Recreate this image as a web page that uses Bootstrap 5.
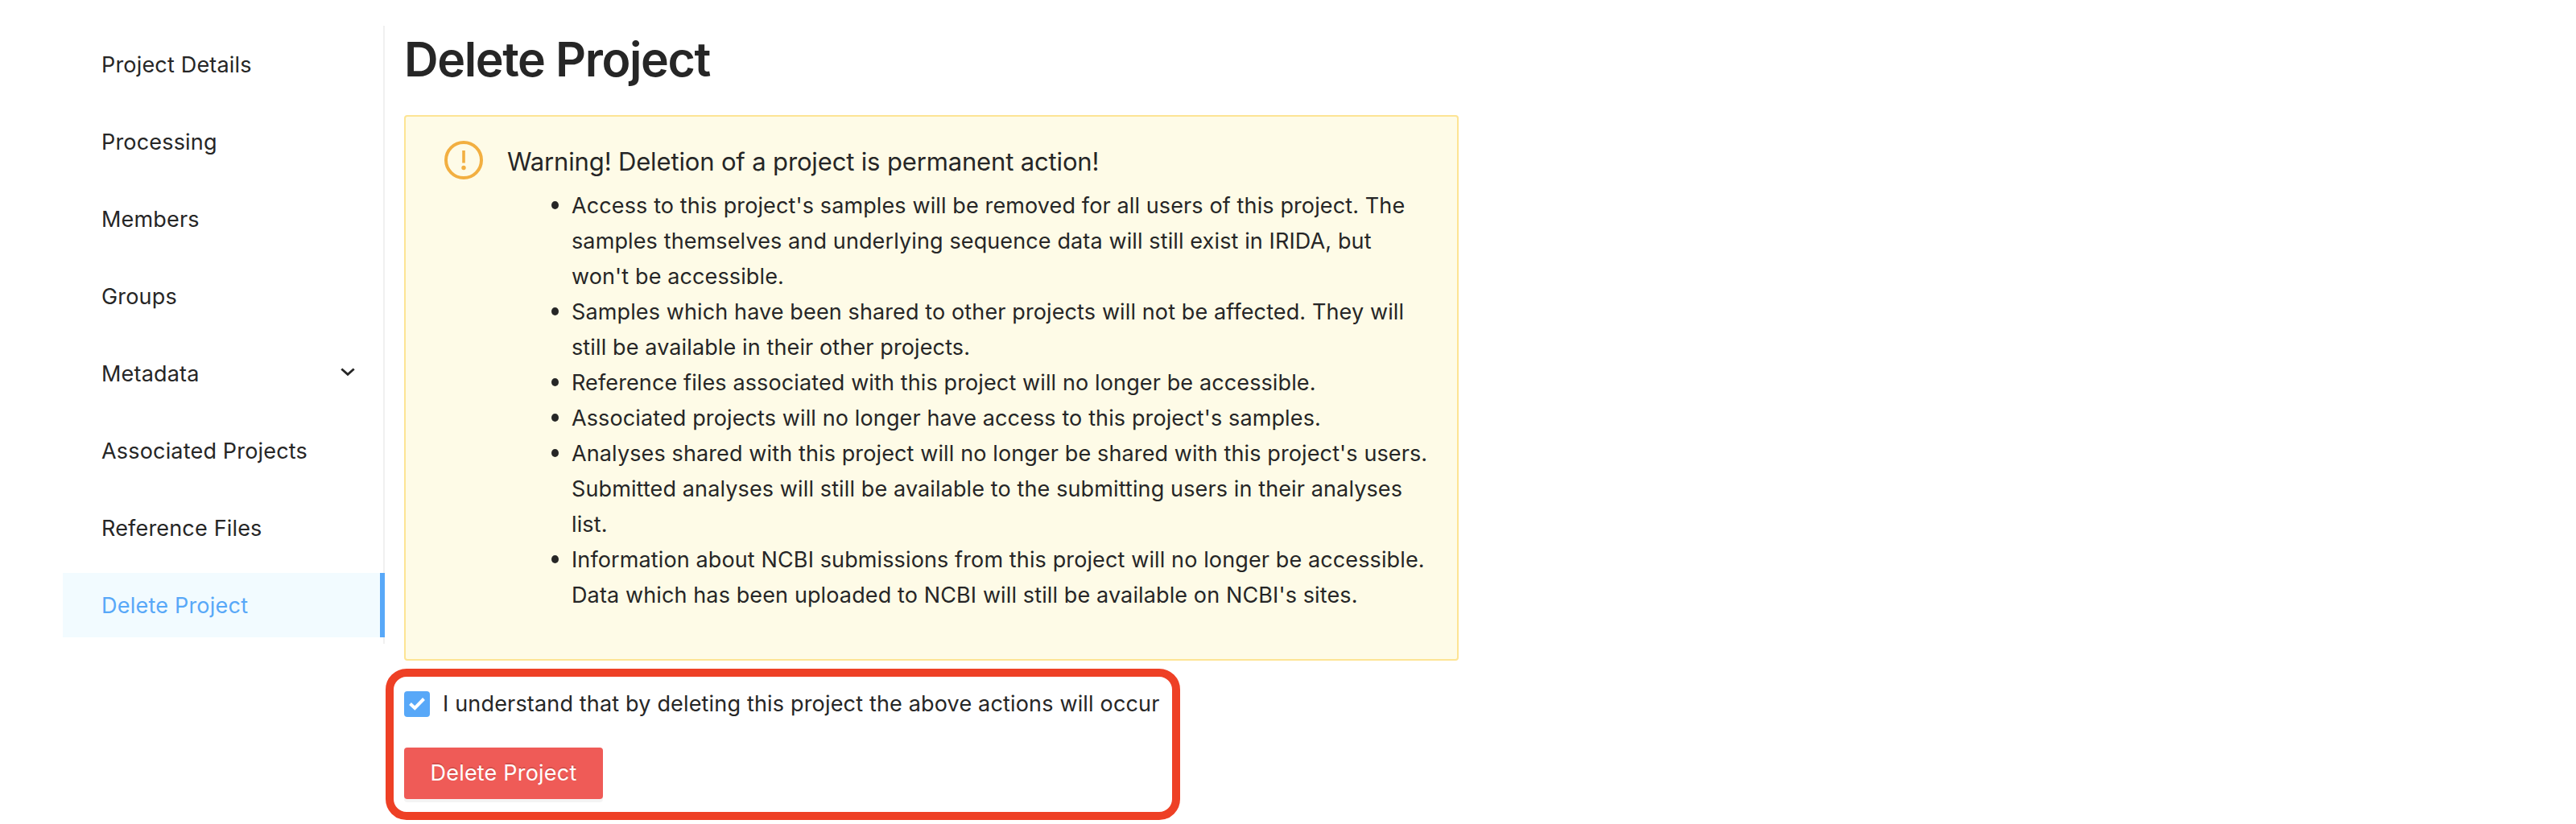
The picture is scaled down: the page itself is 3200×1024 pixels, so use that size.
<!DOCTYPE html>
<html lang="en">
<head>
<meta charset="utf-8">
<title>Delete Project</title>
<link href="https://cdn.jsdelivr.net/npm/bootstrap@5.3.0/dist/css/bootstrap.min.css" rel="stylesheet">
<style>
body{font-family:Inter,"Liberation Sans",sans-serif;font-size:27px;line-height:44px;letter-spacing:.12px;color:#262626;background:#fff}
.page{height:1024px;padding:32px 0 0 78px}
.side{width:400px;height:768px;border-right:2px solid #f0f0f0;padding-top:8px;gap:16px;letter-spacing:.18px}
.side .nav-link{width:400px;height:80px;padding:1px 37px 0 48px;color:#262626;white-space:nowrap}
.side .nav-link.active{color:#58a8f8;background:#f2fbff;border-right:6px solid #58a8f8;letter-spacing:.22px}
.side .chevron{margin-bottom:4px}
.main{width:1310px;margin-left:24px}
.title{font-size:59px;line-height:84px;font-weight:600;letter-spacing:-1.4px;margin:0 0 27px;white-space:nowrap}
.warn{height:678px;border:2px solid #fde494;border-radius:4px;background:#fefbe7;padding:30px 0 0 48px}
.warn-body{margin-left:30px;padding-top:2px}
.warn-title{font-size:31px;line-height:48px;letter-spacing:-.15px;white-space:nowrap;margin-bottom:9px}
.warn ul{padding-left:80px;margin:0;list-style:none}
.warn li{white-space:nowrap;position:relative}
.warn li::before{content:"";position:absolute;left:-25px;top:16px;width:9px;height:10px;border-radius:50%;background:#262626}
.confirm{width:987px;height:188px;margin:10px 0 0 -23px;border:10px solid #ee4025;border-radius:26px;padding:12px 0 0 13px}
.check{width:32px;height:32px;border-radius:4px;background:#58a8f8}
.check-label{letter-spacing:.17px;white-space:nowrap}
.confirm .btn{width:247px;height:64px;margin-top:32px;padding:0;font-size:27px;line-height:60px;letter-spacing:.2px;border:0;border-radius:4px;background:#ef5b57;color:#fff;box-shadow:0 4px 0 rgba(0,0,0,.045);text-shadow:0 -2px 0 rgba(0,0,0,.12);white-space:nowrap}
</style>
<script src="https://cdn.jsdelivr.net/npm/bootstrap@5.3.0/dist/js/bootstrap.bundle.min.js"></script>
</head>
<body>
<div class="page d-flex align-items-start">
<nav class="side nav flex-column flex-nowrap flex-shrink-0">
<a class="nav-link d-flex align-items-center">Project Details</a>
<a class="nav-link d-flex align-items-center">Processing</a>
<a class="nav-link d-flex align-items-center">Members</a>
<a class="nav-link d-flex align-items-center">Groups</a>
<a class="nav-link d-flex align-items-center justify-content-between">Metadata<svg class="chevron" width="18" height="11" viewBox="0 0 18 11" fill="none" stroke="#262626" stroke-width="2.8"><path d="M1.3 1.5 9 8.4 16.7 1.5"/></svg></a>
<a class="nav-link d-flex align-items-center">Associated Projects</a>
<a class="nav-link d-flex align-items-center">Reference Files</a>
<a class="nav-link active d-flex align-items-center">Delete Project</a>
</nav>
<main class="main flex-shrink-0">
<h1 class="title">Delete Project</h1>
<section class="warn d-flex align-items-start">
<svg class="flex-shrink-0" width="48" height="48" viewBox="0 0 48 48"><circle cx="24" cy="24" r="22" fill="none" stroke="#f2af41" stroke-width="4"/><path d="M22.2 12h3.6v15.5h-3.6z" fill="#f2af41"/><circle cx="24" cy="33.5" r="2.7" fill="#f2af41"/></svg>
<div class="warn-body">
<div class="warn-title">Warning! Deletion of a project is permanent action!</div>
<ul>
<li>Access to this project's samples will be removed for all users of this project. The<br>samples themselves and underlying sequence data will still exist in IRIDA, but<br>won't be accessible.</li>
<li>Samples which have been shared to other projects will not be affected. They will<br>still be available in their other projects.</li>
<li>Reference files associated with this project will no longer be accessible.</li>
<li>Associated projects will no longer have access to this project's samples.</li>
<li>Analyses shared with this project will no longer be shared with this project's users.<br>Submitted analyses will still be available to the submitting users in their analyses<br>list.</li>
<li>Information about NCBI submissions from this project will no longer be accessible.<br>Data which has been uploaded to NCBI will still be available on NCBI's sites.</li>
</ul>
</div>
</section>
<section class="confirm">
<div class="d-flex align-items-center gap-3"><span class="check d-flex align-items-center justify-content-center"><svg width="20" height="16" viewBox="0 0 20 16" fill="none" stroke="#fff" stroke-width="4"><path d="M1.5 7.5 7.3 13 18.5 1.5"/></svg></span><span class="check-label">I understand that by deleting this project the above actions will occur</span></div>
<button class="btn" type="button">Delete Project</button>
</section>
</main>
</div>
</body>
</html>
